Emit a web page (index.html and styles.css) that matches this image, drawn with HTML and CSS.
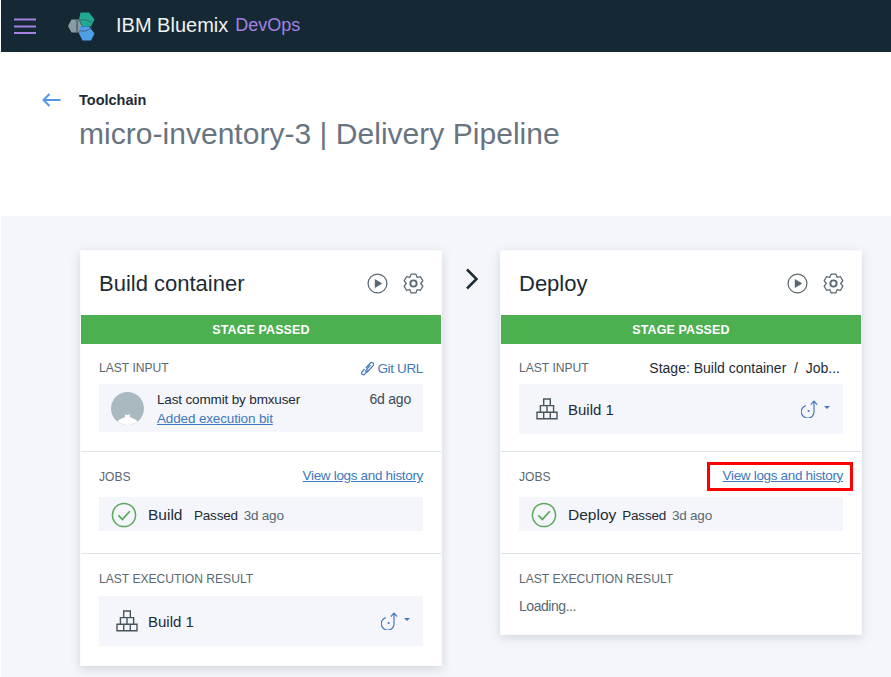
FILE: index.html
```html
<!DOCTYPE html>
<html lang="en">
<head>
<meta charset="utf-8">
<title>micro-inventory-3 | Delivery Pipeline</title>
<link rel="stylesheet" href="styles.css">
</head>
<body>
<svg class="defs" width="0" height="0" aria-hidden="true">
  <defs>
    <symbol id="i-play" viewBox="0 0 22 22">
      <circle cx="11" cy="11" r="9.9" fill="none" stroke="#5a6872" stroke-width="1.3"/>
      <path d="M8.2 6.400 16 11l-7.800 4.600z" fill="#5a6872"/>
    </symbol>
    <symbol id="i-gear" viewBox="0 0 22 22">
      <path d="M7.250 4.500 8.530 1.100h4.940l1.280 3.400 3.590-.59 2.460 4.280L18.500 11l2.300 2.810-2.460 4.280-3.590-.59-1.280 3.400H8.530l-1.280-3.400-3.590.59-2.460-4.280L3.500 11 1.200 8.190l2.460-4.280z" fill="none" stroke="#5a6872" stroke-width="1.300" stroke-linejoin="round"/>
      <circle cx="11" cy="11" r="3.300" fill="none" stroke="#5a6872" stroke-width="2"/>
    </symbol>
    <symbol id="i-blocks" viewBox="0 0 22 22">
      <path d="M7.700 1h6.600v6.600H7.700zM4.400 7.600h13.200v6.600H4.400zM11 7.600v6.600M1 14.200h20v6.600H1zM7.700 14.200v6.600M14.300 14.200v6.600" fill="none" stroke="#47555f" stroke-width="1.400"/>
    </symbol>
    <symbol id="i-check" viewBox="0 0 26 26">
      <circle cx="13" cy="13" r="11.600" fill="none" stroke="#5aaa5a" stroke-width="1.500"/>
      <path d="M7.400 13.400l4 4 7.400-8.200" fill="none" stroke="#5aaa5a" stroke-width="1.700"/>
    </symbol>
    <symbol id="i-rollback" viewBox="0 0 18 18">
      <path d="M4.800 5.600A6.400 6.400 0 1 0 13 11V1.600M9.800 4.600 13 1.200l3.200 3.400" fill="none" stroke="#4178be" stroke-width="1.200"/>
      <circle cx="7.600" cy="11" r="1.100" fill="#4178be"/>
    </symbol>
  </defs>
</svg>

<header class="topbar">
  <svg class="hamburger" width="24" height="16" viewBox="0 0 24 16" aria-hidden="true">
    <path d="M1 1.500h22M1 8.500h22M1 15h22" stroke="#a680e3" stroke-width="2.200" fill="none"/>
  </svg>
  <svg class="logo" width="28" height="30" viewBox="0 0 28 30" aria-hidden="true">
    <path d="M0 15 3.500 8.500h7L14 15l-3.500 6.500h-7z" fill="#8c9aa3"/>
    <path d="M12.500 1.500h8.500L26.500 8.500 23 15.500h-8.500L11 8.500z" fill="#1fa892"/>
    <path d="M12 15.500h9L26.500 22.500 23 29.500h-8.500L11 22.500z" fill="#4f9fe8"/>
    <path d="M7 8.500c3.500 1.500 3.500 10.500 0 13M10.500 8.500c-2.500 3-2.500 10 0 13M12 9.500c3.500-1.500 8-.5 12 2.500M12 19.500c3.500 1.500 8 .5 12-3.500" fill="none" stroke="#43606c" stroke-width=".9"/>
  </svg>
  <span class="brand">IBM Bluemix</span>
  <span class="product">DevOps</span>
</header>

<section class="page-head">
  <svg class="back" width="19" height="14" viewBox="0 0 19 14" aria-hidden="true">
    <path d="M18.500 7H1.500M7.500 1 1.500 7l6 6" fill="none" stroke="#5596e6" stroke-width="2"/>
  </svg>
  <div class="titles">
    <div class="crumb">Toolchain</div>
    <h1 class="title">micro-inventory-3 | Delivery Pipeline</h1>
  </div>
</section>

<main class="pipeline">
  <article class="card">
    <div class="card-head">
      <h2 class="stage-name">Build container</h2>
      <svg class="action"><use href="#i-play"/></svg>
      <svg class="action"><use href="#i-gear"/></svg>
    </div>
    <div class="status">STAGE PASSED</div>
    <section class="block block-input">
      <div class="block-label">
        <span>LAST INPUT</span>
        <span class="git-link">
          <svg class="link-icon" width="13" height="15" viewBox="0 0 13 15" aria-hidden="true">
            <path d="M5 7 9.500 1.800a1.900 1.900 0 0 1 2.800 2.500L6.800 10.600a1.100 1.100 0 0 1-1.700-1.400L9.500 4.200M7.500 9 3.800 13.200a1.800 1.800 0 0 1-2.700-2.400L3.500 8" fill="none" stroke="#4178be" stroke-width="1.200"/>
          </svg>Git URL</span>
      </div>
      <div class="commit">
        <svg class="avatar" width="33" height="33" viewBox="0 0 33 33" aria-hidden="true">
          <circle cx="16.500" cy="16.500" r="16.500" fill="#aab8c0"/>
          <path d="M6.500 29.600c1-2.600 5-3.300 7.500-4.700v-2.600c1 .8 4 .8 5 0v2.600c2.500 1.400 6.500 2.100 7.500 4.700a16.500 16.500 0 0 1-20 0z" fill="#fff"/>
        </svg>
        <div class="commit-text">
          <div class="commit-by">Last commit by bmxuser</div>
          <a class="link" href="#">Added execution bit</a>
        </div>
        <span class="commit-age">6d ago</span>
      </div>
    </section>
    <section class="block block-jobs">
      <div class="block-label">
        <span>JOBS</span>
        <a class="link" href="#">View logs and history</a>
      </div>
      <div class="job">
        <svg class="check"><use href="#i-check"/></svg>
        <span class="job-name">Build</span>
        <span class="job-state">Passed</span>
        <span class="job-age">3d ago</span>
      </div>
    </section>
    <section class="block block-result">
      <div class="block-label"><span>LAST EXECUTION RESULT</span></div>
      <div class="artifact">
        <svg class="blocks"><use href="#i-blocks"/></svg>
        <span class="artifact-name">Build 1</span>
        <svg class="rollback"><use href="#i-rollback"/></svg>
        <span class="caret"></span>
      </div>
    </section>
  </article>

  <svg class="chevron" width="14" height="22" viewBox="0 0 14 22" aria-hidden="true">
    <path d="M2 1.500 11.500 11 2 20.500" fill="none" stroke="#1d2b36" stroke-width="2.500"/>
  </svg>

  <article class="card">
    <div class="card-head">
      <h2 class="stage-name">Deploy</h2>
      <svg class="action"><use href="#i-play"/></svg>
      <svg class="action"><use href="#i-gear"/></svg>
    </div>
    <div class="status">STAGE PASSED</div>
    <section class="block block-input">
      <div class="block-label">
        <span>LAST INPUT</span>
        <span class="source">Stage: Build container&nbsp; /&nbsp; Job...</span>
      </div>
      <div class="artifact">
        <svg class="blocks"><use href="#i-blocks"/></svg>
        <span class="artifact-name">Build 1</span>
        <svg class="rollback"><use href="#i-rollback"/></svg>
        <span class="caret"></span>
      </div>
    </section>
    <section class="block block-jobs">
      <div class="block-label">
        <span>JOBS</span>
        <a class="link link-flagged" href="#">View logs and history</a>
      </div>
      <div class="job">
        <svg class="check"><use href="#i-check"/></svg>
        <span class="job-name">Deploy</span>
        <span class="job-state">Passed</span>
        <span class="job-age">3d ago</span>
      </div>
    </section>
    <section class="block block-result">
      <div class="block-label"><span>LAST EXECUTION RESULT</span></div>
      <div class="loading">Loading...</div>
    </section>
  </article>
</main>
</body>
</html>
```

FILE: styles.css
```css
* { box-sizing: border-box; }
html, body { margin: 0; height: 100%; }
body {
  background: #fff;
  font-family: "Liberation Sans", Arial, sans-serif;
  color: #1d2b36;
  overflow: hidden;
}
.defs { position: absolute; }

.topbar {
  height: 52px;
  margin-left: 1px;
  background: #152934;
  display: flex;
  align-items: center;
  padding-left: 12px;
}
.hamburger { flex: none; }
.logo { margin-left: 31px; flex: none; }
.brand { margin: 0 0 2px 20px; font-size: 20px; color: #f0f3f5; }
.product { margin: 0 0 2px 7px; font-size: 18px; color: #a680e3; }

.page-head {
  height: 164px;
  display: flex;
  align-items: flex-start;
  padding: 41px 0 0 42px;
}
.back { flex: none; }
.titles { margin-left: 18px; margin-top: -1px; }
.crumb { font-size: 14.500px; font-weight: 700; color: #1d2b36; line-height: 16px; }
.title {
  margin: 8px 0 0;
  font-size: 30px;
  line-height: 36px;
  font-weight: 400;
  color: #687480;
  letter-spacing: 0.03px;
}

.pipeline {
  margin-left: 1px;
  height: 461px;
  background: #f4f6fb;
  padding: 34px 0 0 79px;
  display: flex;
  align-items: flex-start;
}
.chevron { margin: 18px 18px 0 20px; flex: none; width: 20px; }

.card {
  width: 362px;
  flex: none;
  background: #fff;
  border: 1px solid #fafbfc;
  box-shadow: 0 3px 10px rgba(60, 75, 95, 0.18);
}
.card-head {
  height: 64px;
  display: flex;
  align-items: center;
  padding: 0 17px 0 18px;
  gap: 15px;
}
.stage-name {
  margin: 2px auto 0 0;
  font-size: 22px;
  font-weight: 400;
  color: #1d2b36;
}
.action { width: 21px; height: 21px; flex: none; }

.status {
  height: 29px;
  background: #4caf50;
  color: #fff;
  font-size: 12.500px;
  font-weight: 700;
  letter-spacing: 0.1px;
  display: flex;
  align-items: center;
  justify-content: center;
}

.block { padding: 0 18px; border-bottom: 1px solid #dfe3e6; }
.block:last-child { border-bottom: 0; }
.block-input { height: 108px; padding-top: 16px; }
.block-jobs { height: 102px; padding-top: 17px; }
.block-result { padding-top: 17px; padding-bottom: 19px; }

.block-label {
  display: flex;
  justify-content: space-between;
  align-items: center;
  height: 16px;
  font-size: 12.100px;
  color: #5a6872;
}
.git-link { color: #4178be; font-size: 13.500px; letter-spacing: -0.35px; display: flex; align-items: center; gap: 3px; }
.link-icon { flex: none; }
.source { color: #1d2b36; font-size: 14px; padding-right: 3px; }
.link { color: #4178be; font-size: 13.500px; letter-spacing: -0.33px; text-decoration: underline; }
.commit-text .link { letter-spacing: -0.15px; }
.block-label .link { padding-bottom: 3px; }
.block-label .link-flagged {
  outline: 3px solid #f00;
  padding: 3px 7px 5px 13px;
  margin: -5px -7px -3px 0;
}
.block-input .block-label { margin-bottom: 8px; }
.block-jobs .block-label { margin-bottom: 12px; }
.block-result .block-label { margin-bottom: 9px; }

.commit {
  height: 48px;
  background: #f4f6fb;
  display: flex;
  align-items: center;
  padding: 0 12px;
}
.avatar { flex: none; }
.commit-text { margin-left: 13px; padding-top: 2px; flex: 1; font-size: 13.500px; line-height: 19px; letter-spacing: -0.15px; }
.commit-by { color: #1d2b36; }
.commit-age { align-self: flex-start; margin-top: 7px; font-size: 14px; color: #3d4b56; letter-spacing: -0.2px; }

.job {
  height: 34px;
  background: #f4f6fb;
  display: flex;
  align-items: center;
  padding-left: 12px;
}
.check { width: 26px; height: 26px; flex: none; margin-top: 2px; }
.job-name { margin-left: 11px; padding-top: 2px; font-size: 15.500px; color: #1d2b36; min-width: 40px; }
.job-state { margin-left: 6px; font-size: 13.500px; color: #1d2b36; letter-spacing: -0.2px; padding-top: 3px; }
.job-age { margin-left: 6px; font-size: 13.500px; color: #5a6872; letter-spacing: -0.25px; padding-top: 3px; }

.artifact {
  height: 50px;
  background: #f4f6fb;
  display: flex;
  align-items: center;
  padding: 0 13px 0 17px;
}
.blocks { width: 22px; height: 22px; flex: none; }
.artifact-name { margin-left: 10px; font-size: 15px; margin-right: auto; color: #1d2b36; }
.rollback { width: 18px; height: 18px; flex: none; }
.caret {
  margin-left: 5px;
  margin-bottom: 4px;
  width: 0;
  height: 0;
  border-left: 3.500px solid transparent;
  border-right: 3.500px solid transparent;
  border-top: 3.500px solid #4178be;
}
.loading { font-size: 14px; color: #5a6872; line-height: 18px; margin-top: 10px; letter-spacing: -0.45px; }
```
